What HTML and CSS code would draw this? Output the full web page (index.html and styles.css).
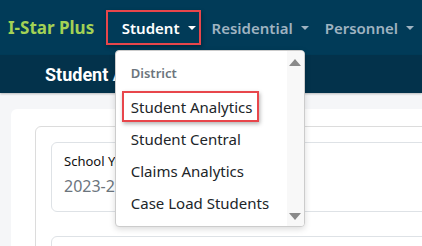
FILE: index.html
```html
<!DOCTYPE html>
<html lang="en">
<head>
    <meta charset="UTF-8">
    <meta name="viewport" content="width=device-width, initial-scale=1.0">
    <title>I-Star Plus</title>
    <link rel="stylesheet" href="styles.css">
</head>
<body>

<nav class="navbar">
    <span class="brand">I-Star Plus</span>
    <div class="nav-links">
        <div class="nav-item">
            <a class="nav-link active marked">Student <span class="caret"></span></a>
            <div class="dropdown">
                <div class="dropdown-list">
                    <div class="dropdown-header">District</div>
                    <a class="dropdown-item"><span class="marked">Student Analytics</span></a>
                    <a class="dropdown-item">Student Central</a>
                    <a class="dropdown-item">Claims Analytics</a>
                    <a class="dropdown-item">Case Load Students</a>
                </div>
                <div class="scrollbar">
                    <span class="arrow-up"></span>
                    <span class="arrow-down"></span>
                </div>
            </div>
        </div>
        <a class="nav-link">Residential <span class="caret"></span></a>
        <a class="nav-link">Personnel <span class="caret"></span></a>
    </div>
</nav>

<div class="page-title">
    <h1>Student Analytics</h1>
</div>

<div class="main">
    <div class="card">
        <div class="filter-card">
            <div class="filter-box">
                <div class="filter-label">School Year</div>
                <div class="filter-value">2023-2024</div>
            </div>
            <div class="filter-box"></div>
        </div>
    </div>
</div>

</body>
</html>
```

FILE: styles.css
```css
body {
    margin: 0;
    font-family: "Noto Sans", "Open Sans", sans-serif;
    background: #f5f6f8;
    overflow: hidden;
}
.navbar {
    display: flex;
    align-items: center;
    height: 55px;
    background: #013b58;
    padding-left: 8px;
}
.brand {
    font-size: 17px;
    font-weight: bold;
    color: #a3d255;
    white-space: nowrap;
    width: 108px;
}
.nav-links {
    display: flex;
    align-items: center;
}
.nav-item {
    position: relative;
}
.nav-link {
    display: flex;
    align-items: center;
    font-size: 15px;
    font-weight: 600;
    color: #9fb3c1;
    padding: 0 8px;
    height: 20px;
    white-space: nowrap;
}
.nav-link.active {
    color: white;
}
.caret {
    display: inline-block;
    margin-left: 8px;
    border-left: 4px solid transparent;
    border-right: 4px solid transparent;
    border-top: 4px solid currentColor;
}
.marked {
    position: relative;
}
.marked::after {
    content: "";
    position: absolute;
    border: 2px solid #e8464b;
    box-shadow: 1px 2px 4px rgba(0, 0, 0, 0.3);
}
.nav-link.marked::after {
    left: -8px;
    right: 3px;
    top: -8px;
    bottom: -7px;
}
.dropdown-item .marked::after {
    left: -9px;
    right: -7px;
    top: -6px;
    bottom: -5px;
}
.dropdown {
    position: absolute;
    top: 32px;
    left: 1px;
    width: 188px;
    height: 175px;
    display: flex;
    background: white;
    border: 1px solid #ccc;
    border-radius: 4px;
    box-shadow: 0 2px 6px rgba(0, 0, 0, 0.15);
    overflow: hidden;
    z-index: 5;
}
.dropdown-list {
    flex: 1;
    padding-top: 13px;
    padding-left: 15px;
}
.dropdown-header {
    font-size: 13px;
    font-weight: 600;
    color: #6c757d;
    height: 20px;
    margin-bottom: 12px;
}
.dropdown-item {
    display: block;
    font-size: 15px;
    color: #212529;
    height: 32px;
    line-height: 22px;
    white-space: nowrap;
}
.scrollbar {
    width: 17px;
    background: #f8f8f8;
    display: flex;
    flex-direction: column;
    justify-content: space-between;
    align-items: center;
    padding: 8px 0 6px;
}
.arrow-up {
    border-left: 6px solid transparent;
    border-right: 6px solid transparent;
    border-bottom: 7px solid #8a8a8a;
}
.arrow-down {
    border-left: 6px solid transparent;
    border-right: 6px solid transparent;
    border-top: 7px solid #8a8a8a;
}
.page-title {
    height: 38px;
    background: #03324b;
    display: flex;
    align-items: center;
    padding-left: 45px;
    box-shadow: 0 1px 2px rgba(0, 0, 0, 0.25);
}
.page-title h1 {
    margin: 0;
    font-family: Roboto, sans-serif;
    font-size: 18px;
    font-weight: bold;
    color: white;
}
.main {
    padding: 16px 0 0 11px;
}
.card {
    width: 700px;
    background: white;
    border-radius: 6px;
    padding: 17px 24px;
}
.filter-card {
    border: 1px solid #dcdcdc;
    border-radius: 6px;
    padding: 15px 15px;
}
.filter-box {
    height: 68px;
    border: 1px solid #dee2e6;
    border-radius: 6px;
    padding-left: 12px;
    margin-bottom: 24px;
}
.filter-label {
    font-size: 13px;
    color: #111;
    margin-top: 9px;
}
.filter-value {
    font-size: 16px;
    color: #6c757d;
    margin-top: 5px;
}
```
